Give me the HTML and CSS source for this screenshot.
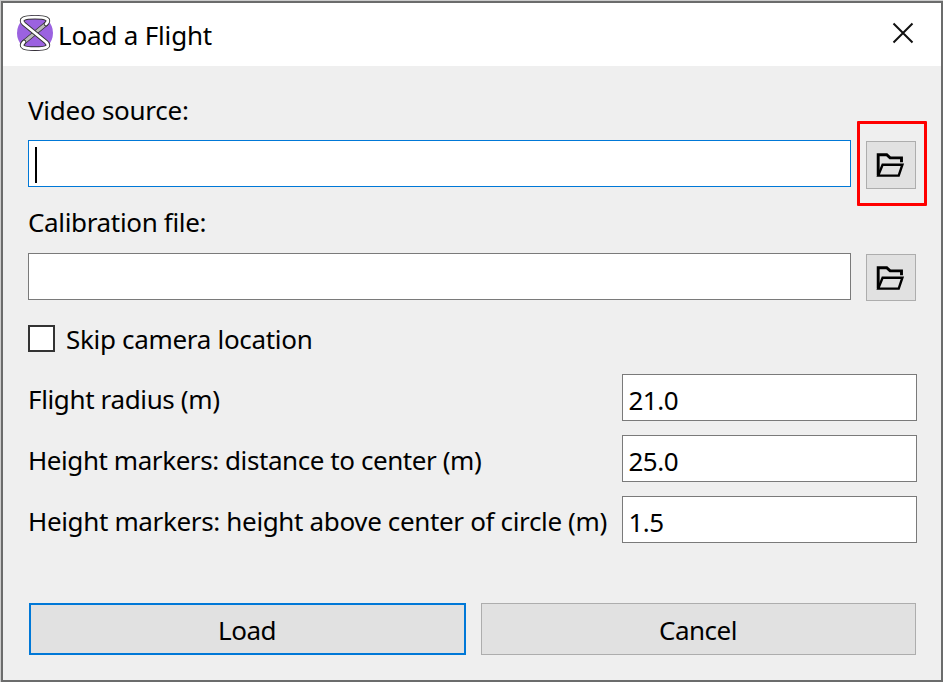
FILE: index.html
```html
<!DOCTYPE html>
<html lang="en">
<head>
<meta charset="utf-8">
<title>Load a Flight</title>
<link rel="stylesheet" href="styles.css">
</head>
<body>
<svg class="defs" width="0" height="0" aria-hidden="true">
  <symbol id="folder" viewBox="0 0 30 26">
    <path d="M3.200 23.500V2.700h8.500l3.400 3.200H26.500v4.300" fill="none" stroke="#000" stroke-width="2.900"/>
    <path d="M3.200 23.600 7.600 12.700h19.800l-3.700 10.900z" fill="none" stroke="#000" stroke-width="2.400"/>
  </symbol>
</svg>
<div class="window">
  <header class="titlebar">
    <svg class="logo" width="38" height="38" viewBox="0 0 38 38">
      <circle cx="19" cy="19" r="18" fill="#9b62e0"/>
      <g fill="none" stroke-linecap="round" stroke-linejoin="round">
        <path d="M7.500 28.500 30.500 9.500" stroke="#333" stroke-width="4.600"/>
        <path d="M7.500 28.500 30.500 9.500" stroke="#b9b9b9" stroke-width="3"/>
        <path d="M30 10C35 5 30 3.200 19 3.200S3 5 8 10L30 28C35 33 30 34.600 19 34.600S3 33 8 28" stroke="#333" stroke-width="4.600"/>
        <path d="M30 10C35 5 30 3.200 19 3.200S3 5 8 10L30 28C35 33 30 34.600 19 34.600S3 33 8 28" stroke="#fff" stroke-width="2.800"/>
      </g>
    </svg>
    <h1 class="title">Load a Flight</h1>
    <svg class="close" width="22" height="22" viewBox="0 0 22 22"><path d="M1.500 1.500 20.500 20.500M20.500 1.500 1.500 20.500" stroke="#111" stroke-width="2"/></svg>
  </header>
  <main class="content">
    <div class="label video-label">Video source:</div>
    <div class="file-row">
      <div class="field focused"><span class="caret"></span></div>
      <div class="browse first"><svg width="30" height="26"><use href="#folder"/></svg><span class="highlight"></span></div>
    </div>
    <div class="label calibration-label">Calibration file:</div>
    <div class="file-row">
      <div class="field"></div>
      <div class="browse"><svg width="30" height="26"><use href="#folder"/></svg></div>
    </div>
    <div class="check-row"><span class="checkbox"></span><span class="skip">Skip camera location</span></div>
    <div class="params">
      <span class="radius">Flight radius (m)</span><div class="field">21.0</div>
      <span class="distance">Height markers: distance to center (m)</span><div class="field">25.0</div>
      <span class="height">Height markers: height above center of circle (m)</span><div class="field">1.5</div>
    </div>
    <div class="actions">
      <div class="button primary">Load</div>
      <div class="button cancel">Cancel</div>
    </div>
  </main>
</div>
</body>
</html>
```
FILE: styles.css
```css
* { box-sizing: border-box; }
body {
  margin: 0;
  width: 943px;
  height: 682px;
  overflow: hidden;
  padding: 1px 0 0 1px;
  background: #ccc;
  color: #000;
  font: 26px/36px "Noto Sans", sans-serif;
  letter-spacing: -0.5px;
  white-space: nowrap;
}
.defs { position: absolute; }
.window {
  width: 942px;
  height: 681px;
  border: 2px solid #6b6c6c;
  background: #efefef;
}
.titlebar {
  display: flex;
  height: 63px;
  padding: 0 27px 3px 13px;
  align-items: center;
  background: #fff;
}
.title {
  flex: 1;
  margin: 4px 0 0 4px;
  font: inherit;
  letter-spacing: -0.18px;
}
.content { padding: 0 24px 0 25px; }
.label { height: 36px; }
.video-label { margin: 26px 0 12px; letter-spacing: -0.26px; }
.calibration-label { margin: 17px 0 13px; letter-spacing: -0.34px; }
.file-row { display: flex; gap: 15px; height: 47px; }
.field {
  height: 47px;
  border: 1px solid #7a7a7a;
  background: #fff;
  padding: 7px 5.5px;
}
.file-row .field { width: 823px; }
.file-row .focused { border-color: #0078d7; padding: 6px; }
.caret { display: block; width: 2px; height: 36px; background: #000; }
.browse {
  position: relative;
  width: 50px;
  height: 47px;
  margin-top: 1px;
  padding: 10px 0 0 8px;
  border: 1px solid #adadad;
  background: #e1e1e1;
}
.browse svg { display: block; }
.first { height: 48px; }
.highlight {
  position: absolute;
  top: -21px;
  left: -10px;
  width: 70px;
  height: 85px;
  border: 3px solid #f00;
  border-radius: 1px;
}
.check-row {
  display: flex;
  gap: 11px;
  align-items: center;
  height: 36px;
  margin-top: 21px;
}
.skip { letter-spacing: -0.31px; }
.checkbox {
  width: 27px;
  height: 27px;
  margin-top: -1px;
  border: 2px solid #333;
  background: #fff;
}
.params {
  display: grid;
  grid-template-columns: 594px 295px;
  row-gap: 14px;
  margin-top: 17px;
}
.params > span { padding-top: 7px; }
.radius { letter-spacing: -0.36px; }
.distance { letter-spacing: -0.43px; }
.height { letter-spacing: -0.35px; }
.actions {
  display: grid;
  grid-template-columns: 437px 435px;
  gap: 15px;
  margin: 60px 0 0 1px;
}
.button {
  height: 52px;
  padding-right: 1px;
  border: 1px solid #adadad;
  background: #e1e1e1;
  text-align: center;
  line-height: 53px;
}
.primary { border: 2px solid #0078d7; line-height: 51px; }
```
